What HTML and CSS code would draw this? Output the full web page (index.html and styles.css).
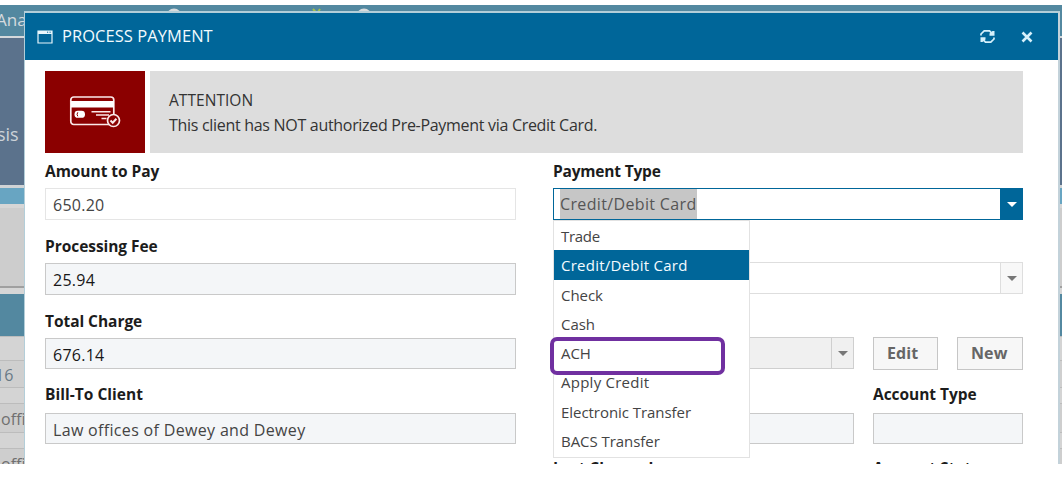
FILE: index.html
```html
<!DOCTYPE html>
<html lang="en">
<head>
<meta charset="utf-8">
<title>Process Payment</title>
<link rel="stylesheet" href="styles.css">
</head>
<body>
<div class="screen">
  <div class="page">
    <div class="nav"><span class="nav-text">Ana</span>
      <svg class="nav-marks" width="240" height="7" viewBox="0 0 240 7"><circle cx="15" cy="11" r="7.500" fill="#d8dcde"/><circle cx="205" cy="11" r="7.500" fill="#d8dcde"/><path d="M154 4l2.500 3M161 4l-2 3" stroke="#a5c04d" stroke-width="2"/></svg>
    </div>
    <div class="hero"><span class="hero-text">sis</span></div>
    <div class="strip"></div>
    <div class="panel"></div>
    <div class="table-head"></div>
    <div class="table-row r1"></div>
    <div class="table-row r2"><span class="cell-link">16</span></div>
    <div class="table-row r3"></div>
    <div class="table-row r4"><span class="cell">offi</span></div>
    <div class="table-row r5"></div>
    <div class="table-row r6"><span class="cell">offi</span></div>
  </div>

  <div class="dialog">
    <div class="dialog-head">
      <svg class="win-icon" width="16" height="14" viewBox="0 0 16 14"><path d="M1 1h14v12H1z" fill="none" stroke="#e8f6fc" stroke-width="1.200"/><path d="M1 1h14v3H1z" fill="#e8f6fc"/><path d="M10 2.200h1.200M12.500 2.200h1.200" stroke="#069" stroke-width="1"/></svg>
      <span class="dialog-title">PROCESS PAYMENT</span>
      <svg class="refresh" width="15" height="15" viewBox="0 0 15 15"><path d="M1 6.500V5l3.200-3.200h5.300l2 2" fill="none" stroke="#d5f0fb" stroke-width="1.700"/><path d="M9.500 6.700V4.500L12.500 2h2v4.700z" fill="#d5f0fb"/><path d="M14 8.500V10l-3.200 3.200H5.500l-2-2" fill="none" stroke="#d5f0fb" stroke-width="1.700"/><path d="M5.500 8.300v2.200L2.500 13h-2V8.300z" fill="#d5f0fb"/></svg>
      <svg class="close" width="12" height="12" viewBox="0 0 12 12"><path d="M1.500 1.500l9 9M10.500 1.500l-9 9" stroke="#d5f0fb" stroke-width="2.600"/></svg>
    </div>
    <div class="dialog-body">
      <div class="alert">
        <div class="alert-icon">
          <svg width="52" height="34" viewBox="0 0 52 34" fill="none" stroke="#fbe9e9"><rect x="1.800" y="2" width="43" height="27.500" rx="3" stroke-width="1.700"/><path d="M2 6h43v6.500H2z" fill="#fff" stroke="none"/><rect x="5.500" y="15.800" width="10.500" height="7" rx="3.400" fill="#fff" stroke="none"/><path d="M8.800 17.300q-1.500 2 0 4" stroke="#8b0000" stroke-width="1"/><path d="M22.500 16.800h19M27 20h13M32.500 23.500h5" stroke-width="1.500"/><circle cx="44.500" cy="25.500" r="6" fill="#8b0000" stroke-width="1.700"/><path d="M41.500 25.500l2.200 2.200 3.700-4" stroke-width="2"/></svg>
        </div>
        <div class="alert-text"><div class="alert-title">ATTENTION</div><div class="alert-msg">This client has NOT authorized Pre-Payment via Credit Card.</div></div>
      </div>

      <div class="columns">
        <div class="column">
          <div class="group"><div class="label">Amount to Pay</div><div class="field open">650.20</div></div>
          <div class="group"><div class="label">Processing Fee</div><div class="field dark">25.94</div></div>
          <div class="group"><div class="label">Total Charge</div><div class="field short dark">676.14</div></div>
          <div class="group fourth"><div class="label label-wide">Bill-To Client</div><div class="field short f-client">Law offices of Dewey and Dewey</div></div>
        </div>
        <div class="column">
          <div class="group"><div class="label label-tight">Payment Type</div>
            <div class="combo focused"><span class="combo-text"><span class="selected-text">Credit/Debit Card</span></span><span class="arrow"></span>
              <div class="menu">
                <div class="item tight">Trade</div>
                <div class="item active">Credit/Debit Card</div>
                <div class="item">Check</div>
                <div class="item">Cash</div>
                <div class="item">ACH</div>
                <div class="item wide">Apply Credit</div>
                <div class="item">Electronic Transfer</div>
                <div class="item">BACS Transfer</div>
                <div class="highlight"></div>
              </div>
            </div>
          </div>
          <div class="group"><div class="label"></div><div class="combo plain"><span class="combo-text"></span><span class="arrow"></span></div></div>
          <div class="group"><div class="label"></div>
            <div class="split"><div class="combo disabled"><span class="combo-text"></span><span class="arrow"></span></div><div class="buttons"><div class="button edit">Edit</div><div class="button new">New</div></div></div>
          </div>
          <div class="group fourth"><div class="split"><div><div class="label"></div><div class="field short"></div></div><div><div class="label">Account Type</div><div class="field short"></div></div></div></div>
          <div class="split last"><div class="label">Last Charged</div><div class="label">Account Status</div></div>
        </div>
      </div>
    </div>
  </div>
</div>
</body>
</html>
```
FILE: styles.css
```css
* { box-sizing: border-box; }
body { margin: 0; background: #fff; font-family: "Open Sans", "Noto Sans", sans-serif; font-size: 16px; color: #333; }
svg { display: block; flex: none; }
.screen { position: relative; width: 1062px; height: 459px; margin-top: 5px; overflow: hidden; }
.page { height: 459px; overflow: hidden; background: #d3d3d3; white-space: nowrap; }
.nav { display: flex; height: 33px; background: #5388a0; border-bottom: 2px solid #d5d9dc; color: #d5dade; line-height: 29px; font-size: 17px; }
.nav-text { width: 159px; margin-left: -4px; }
.nav-marks { margin-left: 4px; }
.hero { height: 147px; background: #5b728c; padding-top: 81px; line-height: 30px; font-size: 18px; color: #ccd2d8; }
.hero-text { margin-left: -3px; }
.strip { height: 19px; background: #68a5c2; border-top: 3px solid #d0d3d5; }
.panel { height: 90px; background: #cdcdcd; border-top: 4px solid #d6d6d6; border-bottom: 6px solid #d6d6d6; box-shadow: inset 0 -2px #a0a0a0; }
.table-head { height: 42px; background: #5388a0; }
.table-row { border-top: 1px solid #bcbcbc; background: #d4d4d4; font-size: 16px; color: #707070; }
.r1 { height: 24px; }
.r2 { height: 27px; line-height: 28px; background: #cfcfcf; }
.r3 { height: 16px; }
.r4 { height: 29px; line-height: 30px; background: #cecece; }
.r5 { height: 16px; }
.r6 { height: 29px; line-height: 30px; background: #cecece; }
.cell-link { margin-left: -5px; color: #687985; }
.cell { margin-left: 1px; }

.dialog { position: absolute; left: 24px; top: 6px; width: 1036px; height: 470px; background: #fff; border: 1px solid #b3ced9; border-right: 2px solid #c3d2da; border-top-width: 2px; }
.dialog-head { display: flex; align-items: center; height: 47px; background: #069; color: #f0fafd; padding: 0 25px 0 12px; }
.dialog-title { flex: 1; margin-left: 9px; margin-top: -2px; font-size: 16.500px; letter-spacing: .05px; }
.close { margin-left: 26px; }
.dialog-body { padding: 11px 35px 0 20px; }
.alert { display: flex; gap: 5px; height: 82px; }
.alert-icon { display: flex; align-items: center; justify-content: center; width: 100px; background: #8b0000; }
.alert-text { flex: 1; padding: 17px 19px; background: #ddd; line-height: 25px; color: #333; }
.alert-title { font-size: 15.500px; letter-spacing: .05px; }
.alert-msg { letter-spacing: -.3px; white-space: nowrap; }

.columns { display: grid; grid-template-columns: 471px 470px; justify-content: space-between; margin-top: 6px; }
.group { height: 75px; }
.label { height: 24px; margin-bottom: 5px; line-height: 24px; font-weight: 700; font-size: 15.500px; color: #1c1c1c; white-space: nowrap; letter-spacing: -.05px; }
.label-tight { letter-spacing: -.2px; }
.label-wide { letter-spacing: .03px; }
.field { height: 32px; padding-left: 7px; line-height: 32px; border: 1px solid #c9c9c9; background: #f4f6f8; color: #444; white-space: nowrap; letter-spacing: .25px; }
.field.open { background: #fff; border-color: #e5e5e5; }
.field.short { height: 31px; }
.field.dark { color: #181818; }
.f-client { letter-spacing: .33px; }
.fourth .label { margin-top: -2px; margin-bottom: 7px; }
.combo { position: relative; display: flex; height: 32px; border: 1px solid #dedede; background: #fff; }
.combo-text { flex: 1; padding-left: 6px; white-space: nowrap; }
.selected-text { display: inline-block; height: 30px; line-height: 31px; background: #c6c6c6; color: #555; letter-spacing: .35px; }
.arrow { display: flex; align-items: center; justify-content: center; width: 22px; border-left: 1px solid #dedede; background: #f8f8f8; color: #777; }
.arrow::before { content: ""; border: 5px solid transparent; border-top-color: currentColor; border-bottom: 0; }
.plain { margin-top: -1px; }
.focused { border-color: #069; }
.focused .arrow { background: #069; border-color: #069; color: #fff; }
.disabled { height: 32px; margin-top: -1px; background: #f0f0f0; border-color: #cfcfcf; }
.disabled .arrow { background: #f0f0f0; border-color: #cfcfcf; }
.menu { position: absolute; left: -1px; top: 31px; z-index: 2; width: 197px; height: 238px; border: 1px solid #e2e2e2; background: #fff; }
.item { height: 29.300px; padding-left: 7px; line-height: 30px; font-size: 15px; letter-spacing: -.05px; color: #444; }
.item.tight { letter-spacing: -.3px; }
.item.wide { letter-spacing: .25px; }
.item.active { background: #069; color: #f4fbff; letter-spacing: .25px; }
.highlight { position: absolute; left: -4px; top: 116px; width: 175px; height: 38px; border: 4px solid #7030a0; border-radius: 7px; }
.split { display: grid; grid-template-columns: 301px 150px; justify-content: space-between; }
.buttons { display: flex; justify-content: space-between; margin-top: -1px; }
.button { width: 66px; height: 33px; border: 1px solid #c6c6c6; background: #f7f7f7; color: #666; font-weight: 700; line-height: 31px; padding-left: 13px; letter-spacing: .1px; }
.edit { width: 65px; }
.last { margin-top: -3px; }
```
